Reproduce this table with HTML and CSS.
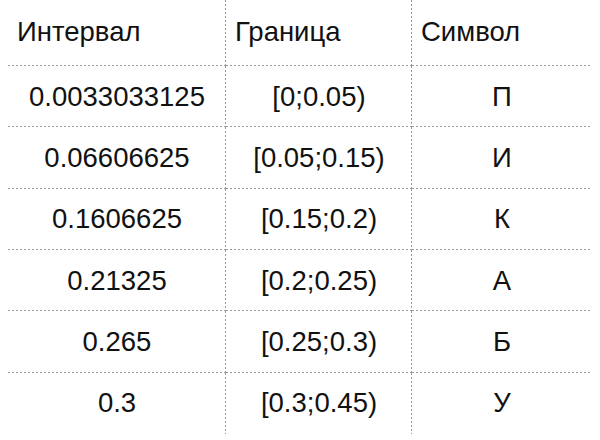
FILE: index.html
```html
<!DOCTYPE html>
<html lang="ru">
<head>
<meta charset="utf-8">
<title>Интервалы</title>
<link rel="stylesheet" href="styles.css">
</head>
<body>
<table class="grid">
  <colgroup>
    <col class="c1"><col class="c2"><col class="c3">
  </colgroup>
  <thead>
    <tr class="head">
      <th>Интервал</th>
      <th>Граница</th>
      <th>Символ</th>
    </tr>
  </thead>
  <tbody>
    <tr><td>0.0033033125</td><td>[0;0.05)</td><td>П</td></tr>
    <tr><td>0.06606625</td><td>[0.05;0.15)</td><td>И</td></tr>
    <tr><td>0.1606625</td><td>[0.15;0.2)</td><td>К</td></tr>
    <tr><td>0.21325</td><td>[0.2;0.25)</td><td>А</td></tr>
    <tr><td>0.265</td><td>[0.25;0.3)</td><td>Б</td></tr>
    <tr class="last"><td>0.3</td><td>[0.3;0.45)</td><td>У</td></tr>
  </tbody>
</table>
</body>
</html>
```

FILE: styles.css
```css
html, body {
  background: #ffffff;
}
body {
  margin: 0 8px;
  font-family: "Liberation Sans", Arial, sans-serif;
  color: #111111;
}
.grid {
  border-collapse: separate;
  border-spacing: 0;
  table-layout: fixed;
  width: 584px;
  font-size: 27.5px;
}
.c1 { width: 218px; }
.c2 { width: 186px; }
.c3 { width: 180px; }

.grid th,
.grid td {
  padding: 0;
  font-weight: normal;
  vertical-align: middle;
  background-image:
    repeating-linear-gradient(to right, #999999 0 2px, transparent 2px 4px),
    repeating-linear-gradient(to bottom, #999999 0 2px, transparent 2px 4px);
  background-size: 100% 1px, 1px 100%;
  background-position: left bottom, right top;
  background-repeat: no-repeat;
}
.grid th:last-child,
.grid td:last-child {
  background-image:
    repeating-linear-gradient(to right, #999999 0 2px, transparent 2px 4px);
  background-size: 100% 1px;
  background-position: left bottom;
}
.grid .last td {
  background-image:
    repeating-linear-gradient(to bottom, #999999 0 2px, transparent 2px 4px);
  background-size: 1px 100%;
  background-position: right top;
}
.grid .last td:last-child {
  background-image: none;
}

.head th {
  height: 62px;
  padding: 1px 0 3px 9px;
  text-align: left;
}
.grid td {
  height: 61.33px;
  text-align: center;
}
```
